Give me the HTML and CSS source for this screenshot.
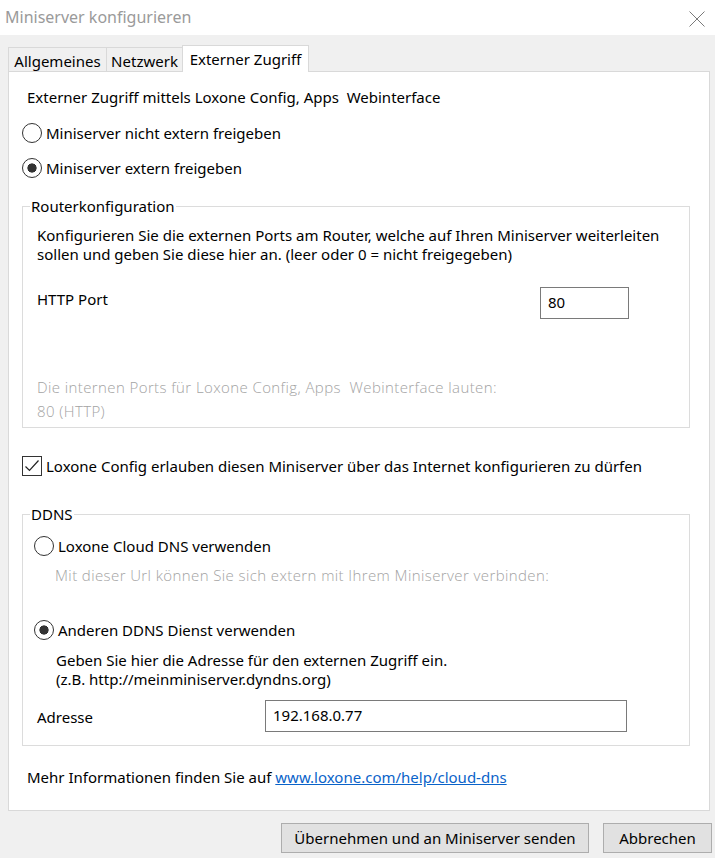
FILE: index.html
```html
<!DOCTYPE html>
<html lang="de">
<head>
<meta charset="utf-8">
<title>Miniserver konfigurieren</title>
<link rel="stylesheet" href="styles.css">
</head>
<body>
<div class="titlebar">
  <span class="title">Miniserver konfigurieren</span>
  <svg class="close" width="16" height="16" viewBox="0 0 16 16"><path d="M0.5 0.5 L15.5 15.5 M15.5 0.5 L0.5 15.5" stroke="#7a7a7a" stroke-width="1" fill="none"/></svg>
</div>
<div class="main">
  <div class="tabs">
    <div class="tab t1">Allgemeines</div>
    <div class="tab t2">Netzwerk</div>
    <div class="tab t3 active">Externer Zugriff</div>
  </div>
  <div class="panel">
    <div class="intro">Externer Zugriff mittels Loxone Config, Apps&nbsp; Webinterface</div>
    <div class="opt r1"><span class="radio"></span>Miniserver nicht extern freigeben</div>
    <div class="opt r2"><span class="radio checked"></span>Miniserver extern freigeben</div>

    <fieldset class="group g1">
      <legend>Routerkonfiguration</legend>
      <div class="g1text">Konfigurieren Sie die externen Ports am Router, welche auf Ihren Miniserver weiterleiten<br>sollen und geben Sie diese hier an. (leer oder 0 = nicht freigegeben)</div>
      <div class="portrow">
        <span class="portlabel">HTTP Port</span>
        <div class="input port">80</div>
      </div>
      <div class="disabled g1dis">Die internen Ports für Loxone Config, Apps&nbsp; Webinterface lauten:<br>80 (HTTP)</div>
    </fieldset>

    <div class="opt cb"><span class="checkbox"><svg width="18" height="18" viewBox="0 0 18 18"><path d="M2.5 9.5 L6.5 13.5 L15.5 3.5" stroke="#222" stroke-width="1.2" fill="none"/></svg></span>Loxone Config erlauben diesen Miniserver über das Internet konfigurieren zu dürfen</div>

    <fieldset class="group g2">
      <legend>DDNS</legend>
      <div class="opt d1"><span class="radio"></span>Loxone Cloud DNS verwenden</div>
      <div class="disabled d1text">Mit dieser Url können Sie sich extern mit Ihrem Miniserver verbinden:</div>
      <div class="opt d2"><span class="radio checked"></span>Anderen DDNS Dienst verwenden</div>
      <div class="d2text">Geben Sie hier die Adresse für den externen Zugriff ein.<br>(z.B. http://meinminiserver.dyndns.org)</div>
      <div class="addrrow">
        <span class="addrlabel">Adresse</span>
        <div class="input addr">192.168.0.77</div>
      </div>
    </fieldset>

    <div class="info">Mehr Informationen finden Sie auf <a href="#">www.loxone.com/help/cloud-dns</a></div>
  </div>
  <div class="buttons">
    <div class="btn b1">Übernehmen und an Miniserver senden</div>
    <div class="btn b2">Abbrechen</div>
  </div>
</div>
</body>
</html>
```
FILE: styles.css
```css
html, body {
  margin: 0;
  padding: 0;
}
body {
  width: 715px;
  height: 858px;
  background: #f0f0f0;
  font-family: "Noto Sans", "Open Sans", sans-serif;
  font-size: 15px;
  color: #000;
  overflow: hidden;
}
.titlebar {
  height: 35px;
  background: #fff;
  display: flex;
  align-items: center;
  justify-content: space-between;
  padding: 0 10px 0 5px;
}
.title {
  font-size: 16px;
  color: #9a9a9a;
  margin-top: -1px;
}
.close {
  display: block;
  margin-top: 3px;
}
.main {
  padding-top: 10px;
}
.tabs {
  display: flex;
  align-items: flex-end;
  margin-left: 8px;
  margin-bottom: -1px;
  height: 27px;
  position: relative;
  z-index: 1;
}
.tab {
  box-sizing: border-box;
  height: 24px;
  margin-bottom: 1px;
  border: 1px solid #d9d9d9;
  border-bottom: none;
  background: #f0f0f0;
  display: flex;
  align-items: center;
  justify-content: center;
  line-height: 20px;
  padding-top: 2px;
}
.t1 { width: 99px; }
.t2 { width: 77px; margin-left: -1px; }
.t3 { width: 127px; margin-left: -1px; }
.tab.active {
  height: 27px;
  margin-bottom: 0;
  background: #fff;
  padding-top: 0;
  padding-bottom: 1px;
}
.panel {
  box-sizing: border-box;
  margin-left: 8px;
  width: 702px;
  height: 740px;
  background: #fff;
  border: 1px solid #d9d9d9;
  padding: 15px 19px 0 13px;
}
.intro {
  height: 20px;
  line-height: 20px;
  padding-left: 5px;
}
.opt {
  display: flex;
  align-items: center;
  height: 20px;
  line-height: 20px;
}
.radio, .checkbox {
  box-sizing: border-box;
  flex: none;
  width: 20px;
  height: 20px;
  border: 1px solid #333;
  margin-right: 4px;
  background: #fff;
}
.radio {
  border-radius: 50%;
}
.radio.checked {
  background: radial-gradient(circle, #333 0 4.3px, #fff 4.9px);
}
.checkbox svg {
  display: block;
}
.r1 { margin-top: 16px; }
.r2 { margin-top: 15px; }
.group {
  margin: 0;
  padding: 0;
  border: 1px solid #dcdcdc;
  min-inline-size: 0;
}
.group legend {
  margin-left: 7px;
  padding: 0 1px;
  line-height: 20px;
  height: 20px;
}
.g1 {
  margin-top: 18px;
  padding-bottom: 4px;
}
.g1text {
  margin-top: 10px;
  padding-left: 14px;
  line-height: 19px;
}
.portrow {
  margin-top: 23px;
  display: flex;
  align-items: flex-start;
  height: 32px;
  padding-left: 14px;
}
.portlabel {
  margin-top: 2px;
  line-height: 20px;
}
.input {
  box-sizing: border-box;
  height: 32px;
  border: 1px solid #7a7a7a;
  background: #fff;
  padding: 3px 7px 0;
  line-height: 22px;
}
.port {
  width: 89px;
  margin-left: auto;
  margin-right: 60px;
}
.disabled {
  font-family: "Open Sans", "Noto Sans", sans-serif;
  font-weight: 300;
  color: #a3a3a3;
  letter-spacing: 0.4px;
}
.g1dis {
  margin-top: 56px;
  line-height: 24px;
  padding-left: 14px;
}
.cb { margin-top: 28px; }
.g2 {
  margin-top: 28px;
  padding-bottom: 13px;
}
.d1 {
  margin-top: 12px;
  padding-left: 11px;
}
.d1text {
  margin-top: 9px;
  height: 20px;
  line-height: 20px;
  padding-left: 32px;
}
.d2 {
  margin-top: 35px;
  padding-left: 11px;
}
.d2text {
  margin-top: 11px;
  line-height: 19px;
  padding-left: 33px;
}
.addrrow {
  margin-top: 11px;
  display: flex;
  align-items: center;
  height: 32px;
}
.addrlabel {
  box-sizing: border-box;
  width: 242px;
  padding-left: 14px;
  line-height: 20px;
  margin-top: 2px;
}
.addr {
  width: 362px;
}
.info {
  margin-top: 21px;
  height: 20px;
  line-height: 20px;
  padding-left: 5px;
}
.info a {
  color: #0a63c9;
  text-decoration: underline;
}
.buttons {
  margin-top: 12px;
  display: flex;
  justify-content: flex-end;
  gap: 14px;
  padding-right: 3px;
}
.btn {
  box-sizing: border-box;
  height: 30px;
  border: 1px solid #adadad;
  background: #e1e1e1;
  display: flex;
  align-items: center;
  justify-content: center;
  line-height: 20px;
}
.b1 { width: 308px; }
.b2 { width: 109px; }
```
